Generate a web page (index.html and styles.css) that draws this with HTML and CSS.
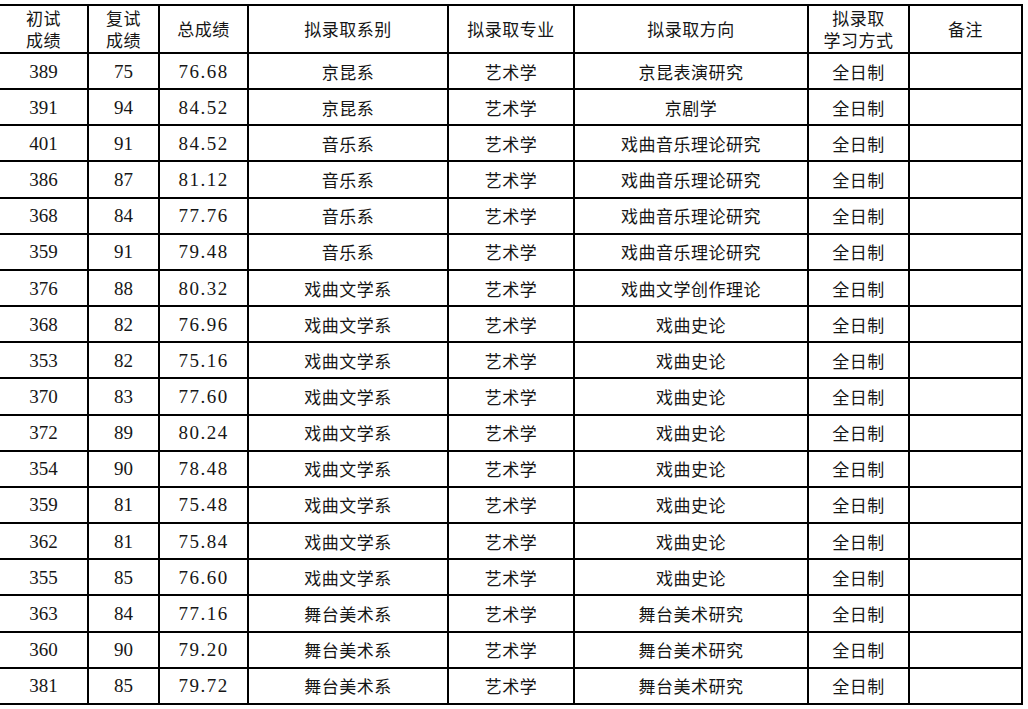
FILE: index.html
```html
<!DOCTYPE html>
<html lang="zh-CN">
<head>
<meta charset="utf-8">
<title>拟录取名单</title>
<link rel="stylesheet" href="styles.css">
</head>
<body>
<div class="sheet">
  <div class="cell head">初试<br>成绩</div>
  <div class="cell head">复试<br>成绩</div>
  <div class="cell head">总成绩</div>
  <div class="cell head">拟录取系别</div>
  <div class="cell head">拟录取专业</div>
  <div class="cell head">拟录取方向</div>
  <div class="cell head">拟录取<br>学习方式</div>
  <div class="cell head">备注</div>

  <div class="cell num">389</div><div class="cell num">75</div><div class="cell num score">76.68</div><div class="cell">京昆系</div><div class="cell">艺术学</div><div class="cell">京昆表演研究</div><div class="cell">全日制</div><div class="cell"></div>
  <div class="cell num">391</div><div class="cell num">94</div><div class="cell num score">84.52</div><div class="cell">京昆系</div><div class="cell">艺术学</div><div class="cell">京剧学</div><div class="cell">全日制</div><div class="cell"></div>
  <div class="cell num">401</div><div class="cell num">91</div><div class="cell num score">84.52</div><div class="cell">音乐系</div><div class="cell">艺术学</div><div class="cell">戏曲音乐理论研究</div><div class="cell">全日制</div><div class="cell"></div>
  <div class="cell num">386</div><div class="cell num">87</div><div class="cell num score">81.12</div><div class="cell">音乐系</div><div class="cell">艺术学</div><div class="cell">戏曲音乐理论研究</div><div class="cell">全日制</div><div class="cell"></div>
  <div class="cell num">368</div><div class="cell num">84</div><div class="cell num score">77.76</div><div class="cell">音乐系</div><div class="cell">艺术学</div><div class="cell">戏曲音乐理论研究</div><div class="cell">全日制</div><div class="cell"></div>
  <div class="cell num">359</div><div class="cell num">91</div><div class="cell num score">79.48</div><div class="cell">音乐系</div><div class="cell">艺术学</div><div class="cell">戏曲音乐理论研究</div><div class="cell">全日制</div><div class="cell"></div>
  <div class="cell num">376</div><div class="cell num">88</div><div class="cell num score">80.32</div><div class="cell">戏曲文学系</div><div class="cell">艺术学</div><div class="cell">戏曲文学创作理论</div><div class="cell">全日制</div><div class="cell"></div>
  <div class="cell num">368</div><div class="cell num">82</div><div class="cell num score">76.96</div><div class="cell">戏曲文学系</div><div class="cell">艺术学</div><div class="cell">戏曲史论</div><div class="cell">全日制</div><div class="cell"></div>
  <div class="cell num">353</div><div class="cell num">82</div><div class="cell num score">75.16</div><div class="cell">戏曲文学系</div><div class="cell">艺术学</div><div class="cell">戏曲史论</div><div class="cell">全日制</div><div class="cell"></div>
  <div class="cell num">370</div><div class="cell num">83</div><div class="cell num score">77.60</div><div class="cell">戏曲文学系</div><div class="cell">艺术学</div><div class="cell">戏曲史论</div><div class="cell">全日制</div><div class="cell"></div>
  <div class="cell num">372</div><div class="cell num">89</div><div class="cell num score">80.24</div><div class="cell">戏曲文学系</div><div class="cell">艺术学</div><div class="cell">戏曲史论</div><div class="cell">全日制</div><div class="cell"></div>
  <div class="cell num">354</div><div class="cell num">90</div><div class="cell num score">78.48</div><div class="cell">戏曲文学系</div><div class="cell">艺术学</div><div class="cell">戏曲史论</div><div class="cell">全日制</div><div class="cell"></div>
  <div class="cell num">359</div><div class="cell num">81</div><div class="cell num score">75.48</div><div class="cell">戏曲文学系</div><div class="cell">艺术学</div><div class="cell">戏曲史论</div><div class="cell">全日制</div><div class="cell"></div>
  <div class="cell num">362</div><div class="cell num">81</div><div class="cell num score">75.84</div><div class="cell">戏曲文学系</div><div class="cell">艺术学</div><div class="cell">戏曲史论</div><div class="cell">全日制</div><div class="cell"></div>
  <div class="cell num">355</div><div class="cell num">85</div><div class="cell num score">76.60</div><div class="cell">戏曲文学系</div><div class="cell">艺术学</div><div class="cell">戏曲史论</div><div class="cell">全日制</div><div class="cell"></div>
  <div class="cell num">363</div><div class="cell num">84</div><div class="cell num score">77.16</div><div class="cell">舞台美术系</div><div class="cell">艺术学</div><div class="cell">舞台美术研究</div><div class="cell">全日制</div><div class="cell"></div>
  <div class="cell num">360</div><div class="cell num">90</div><div class="cell num score">79.20</div><div class="cell">舞台美术系</div><div class="cell">艺术学</div><div class="cell">舞台美术研究</div><div class="cell">全日制</div><div class="cell"></div>
  <div class="cell num">381</div><div class="cell num">85</div><div class="cell num score">79.72</div><div class="cell">舞台美术系</div><div class="cell">艺术学</div><div class="cell">舞台美术研究</div><div class="cell">全日制</div><div class="cell"></div>
</div>
</body>
</html>
```

FILE: styles.css
```css
html, body {
  margin: 0;
  padding: 0;
  background: #ffffff;
}

body {
  padding-top: 4px;
  overflow: hidden;
  font-family: "Noto Sans CJK SC", "Noto Sans", sans-serif;
  color: #161616;
}

.sheet {
  display: grid;
  grid-template-columns: 89px 71px 89px 200px 126px 234px 101px 113px;
  grid-template-rows: 48px;
  grid-auto-rows: 36.17px;
  width: max-content;
  margin-left: -2px;
  border-left: 2px solid #000;
  border-top: 2px solid #000;
}

.cell {
  display: flex;
  align-items: center;
  justify-content: center;
  text-align: center;
  border-right: 2px solid #000;
  border-bottom: 2px solid #000;
  font-size: 17px;
  letter-spacing: 0.5px;
  line-height: 21px;
  font-weight: 400;
  overflow: hidden;
  white-space: nowrap;
}

.head {
  line-height: 22px;
}

.num {
  font-family: "Liberation Serif", "Times New Roman", serif;
  font-size: 19px;
  letter-spacing: 0;
}

.score {
  letter-spacing: 1.5px;
}
```
